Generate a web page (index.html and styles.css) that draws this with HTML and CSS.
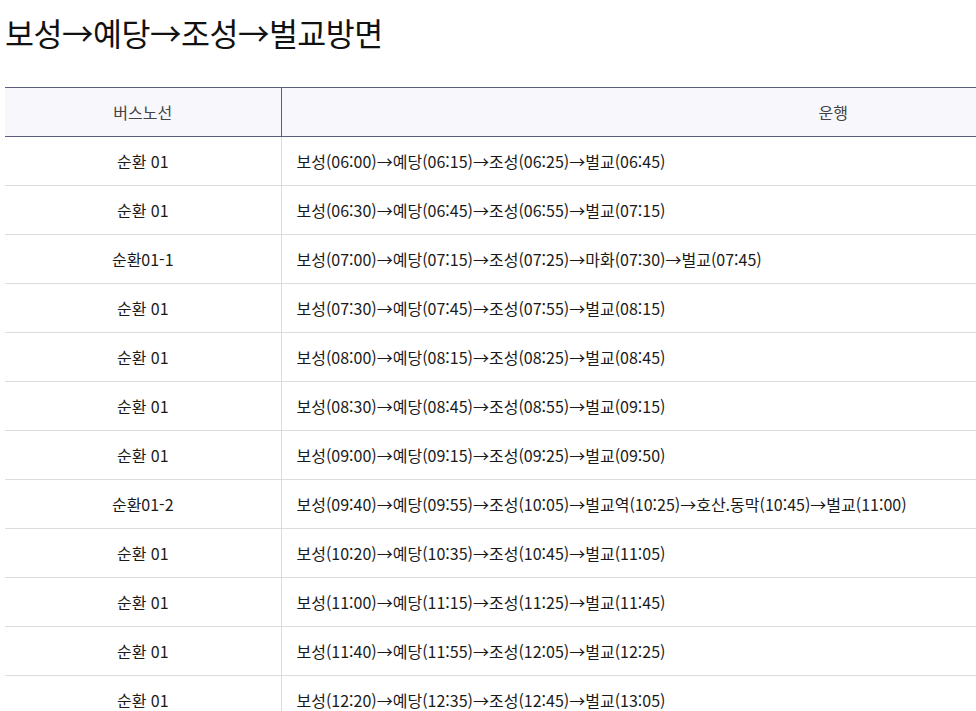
FILE: index.html
```html
<!DOCTYPE html>
<html lang="ko">
<head>
<meta charset="utf-8">
<link rel="stylesheet" href="styles.css">
</head>
<body>
<div class="page">
<h1 class="title">보성→예당→조성→벌교방면</h1>
<table class="timetable">
<colgroup><col class="c1"><col class="c2"></colgroup>
<thead>
<tr><th>버스노선</th><th>운행</th></tr>
</thead>
<tbody>
<tr><td>순환 01</td><td>보성(06:00)→예당(06:15)→조성(06:25)→벌교(06:45)</td></tr>
<tr><td>순환 01</td><td>보성(06:30)→예당(06:45)→조성(06:55)→벌교(07:15)</td></tr>
<tr><td>순환01-1</td><td>보성(07:00)→예당(07:15)→조성(07:25)→마화(07:30)→벌교(07:45)</td></tr>
<tr><td>순환 01</td><td>보성(07:30)→예당(07:45)→조성(07:55)→벌교(08:15)</td></tr>
<tr><td>순환 01</td><td>보성(08:00)→예당(08:15)→조성(08:25)→벌교(08:45)</td></tr>
<tr><td>순환 01</td><td>보성(08:30)→예당(08:45)→조성(08:55)→벌교(09:15)</td></tr>
<tr><td>순환 01</td><td>보성(09:00)→예당(09:15)→조성(09:25)→벌교(09:50)</td></tr>
<tr><td>순환01-2</td><td>보성(09:40)→예당(09:55)→조성(10:05)→벌교역(10:25)→호산.동막(10:45)→벌교(11:00)</td></tr>
<tr><td>순환 01</td><td>보성(10:20)→예당(10:35)→조성(10:45)→벌교(11:05)</td></tr>
<tr><td>순환 01</td><td>보성(11:00)→예당(11:15)→조성(11:25)→벌교(11:45)</td></tr>
<tr><td>순환 01</td><td>보성(11:40)→예당(11:55)→조성(12:05)→벌교(12:25)</td></tr>
<tr><td>순환 01</td><td>보성(12:20)→예당(12:35)→조성(12:45)→벌교(13:05)</td></tr>
</tbody>
</table>
</div>
</body>
</html>
```
FILE: styles.css
```css
html, body {
  margin: 0;
  padding: 0;
  background: #fff;
}
body {
  font-family: "Noto Sans CJK KR", "Noto Sans", sans-serif;
  color: #333;
}
.page {
  width: 976px;
  height: 711px;
  overflow: hidden;
  padding: 0 0 0 5px;
  box-sizing: border-box;
}
.title {
  margin: 0;
  padding-top: 10px;
  height: 87px;
  box-sizing: border-box;
  font-size: 31.5px;
  font-weight: 400;
  line-height: 44px;
  color: #111;
  letter-spacing: -0.5px;
}
.timetable {
  width: 1380px;
  border-collapse: collapse;
  table-layout: fixed;
  font-size: 16px;
}
.c1 { width: 276px; }
.timetable th {
  height: 48px;
  padding: 0;
  background: #f7f7fc;
  border-top: 1px solid #5a5d7c;
  border-bottom: 1px solid #5a5d7c;
  font-weight: 400;
  color: #444;
  text-align: center;
}
.timetable th + th {
  border-left: 1px solid #5a5d7c;
}
.timetable td {
  height: 47px;
  padding: 0 0 1px;
  border-bottom: 1px solid #dcdcdc;
  text-align: center;
  color: #1a1a1a;
  font-weight: 400;
}
.timetable td + td {
  border-left: 1px solid #dcdcdc;
  text-align: left;
  padding-left: 15px;
}
```
